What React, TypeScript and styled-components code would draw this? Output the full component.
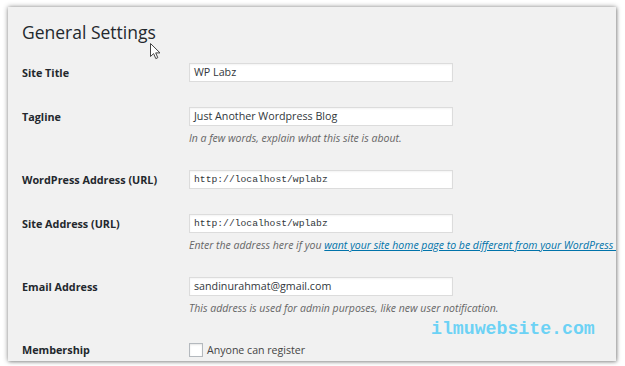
import React from "react";
import styled, { createGlobalStyle } from "styled-components";

const Global = createGlobalStyle`
  html, body { margin: 0; padding: 0; background: #ffffff; }
  body { font-family: "Open Sans", "Noto Sans", sans-serif; }
`;

const Stage = styled.div`
  width: 625px;
  height: 366px;
  padding: 7px 0 0 8px;
  box-sizing: border-box;
`;

const Panel = styled.div`
  position: relative;
  width: 608px;
  height: 354px;
  background: #f1f1f1;
  box-shadow: 0 0 5px rgba(0, 0, 0, 0.45), 1px 1px 3px rgba(0, 0, 0, 0.2);
  overflow: hidden;
  padding-left: 14px;
  box-sizing: border-box;
`;

const Title = styled.h1`
  margin: 0;
  padding-top: 13px;
  height: 44px;
  box-sizing: border-box;
  font-size: 17.5px;
  line-height: 24px;
  font-weight: 400;
  color: #23282d;
`;

const Row = styled.div`
  display: grid;
  grid-template-columns: 167px 1fr;
  padding: 12px 0 13px;
`;

const Label = styled.div`
  font-size: 10.8px;
  line-height: 19px;
  font-weight: 700;
  color: #23282d;
  white-space: nowrap;
`;

const Field = styled.div`
  min-width: 0;
`;

const Input = styled.div<{ $mono?: boolean }>`
  width: 264px;
  height: 19px;
  box-sizing: border-box;
  background: #fff;
  border: 1px solid #dcdcdc;
  box-shadow: inset 0 1px 2px rgba(0, 0, 0, 0.05);
  padding: 0 4px;
  font-family: ${(p) =>
    p.$mono ? '"Liberation Mono", "DejaVu Sans Mono", monospace' : '"Open Sans", sans-serif'};
  font-size: ${(p) => (p.$mono ? "9.7px" : "10.7px")};
  line-height: 17px;
  color: #32373c;
  white-space: nowrap;
`;

const Desc = styled.p`
  margin: 5px 0 0;
  font-size: 10.5px;
  line-height: 14px;
  font-style: italic;
  color: #666;
  white-space: nowrap;
  a {
    color: #0073aa;
    text-decoration: underline;
  }
`;

const CheckRow = styled.label`
  display: flex;
  align-items: center;
  gap: 4px;
  height: 19px;
  font-size: 10.6px;
  color: #444;
`;

const Box = styled.span`
  width: 12px;
  height: 12px;
  border: 1px solid #b4b9be;
  background: #fff;
  box-shadow: inset 0 1px 2px rgba(0, 0, 0, 0.1);
  flex: none;
`;

const Watermark = styled.div`
  position: absolute;
  left: 423px;
  top: 312px;
  font-family: "Liberation Mono", "Courier New", monospace;
  font-weight: 700;
  font-size: 18.2px;
  line-height: 20px;
  color: #6cd2f5;
`;

const Cursor = styled.svg`
  position: absolute;
  left: 142px;
  top: 36px;
`;

export default function App() {
  return (
    <Stage>
      <Global />
      <Panel>
        <Title>General Settings</Title>
        <Row>
          <Label>Site Title</Label>
          <Field>
            <Input>WP Labz</Input>
          </Field>
        </Row>
        <Row>
          <Label>Tagline</Label>
          <Field>
            <Input>Just Another Wordpress Blog</Input>
            <Desc>In a few words, explain what this site is about.</Desc>
          </Field>
        </Row>
        <Row>
          <Label>WordPress Address (URL)</Label>
          <Field>
            <Input $mono>http://localhost/wplabz</Input>
          </Field>
        </Row>
        <Row>
          <Label>Site Address (URL)</Label>
          <Field>
            <Input $mono>http://localhost/wplabz</Input>
            <Desc>
              Enter the address here if you{" "}
              <a href="#">want your site home page to be different from your WordPress installation directory.</a>
            </Desc>
          </Field>
        </Row>
        <Row>
          <Label>Email Address</Label>
          <Field>
            <Input>sandinurahmat@gmail.com</Input>
            <Desc>This address is used for admin purposes, like new user notification.</Desc>
          </Field>
        </Row>
        <Row>
          <Label>Membership</Label>
          <Field>
            <CheckRow>
              <Box />
              Anyone can register
            </CheckRow>
          </Field>
        </Row>
        <Watermark>ilmuwebsite.com</Watermark>
        <Cursor width="12" height="18" viewBox="0 0 12 18">
          <path d="M0.5 0.5 L0.5 13.5 L3.6 10.6 L5.8 15.6 L7.8 14.7 L5.7 9.9 L10 9.9 Z" fill="#fff" stroke="#444" strokeWidth="1" strokeLinejoin="round" />
        </Cursor>
      </Panel>
    </Stage>
  );
}
